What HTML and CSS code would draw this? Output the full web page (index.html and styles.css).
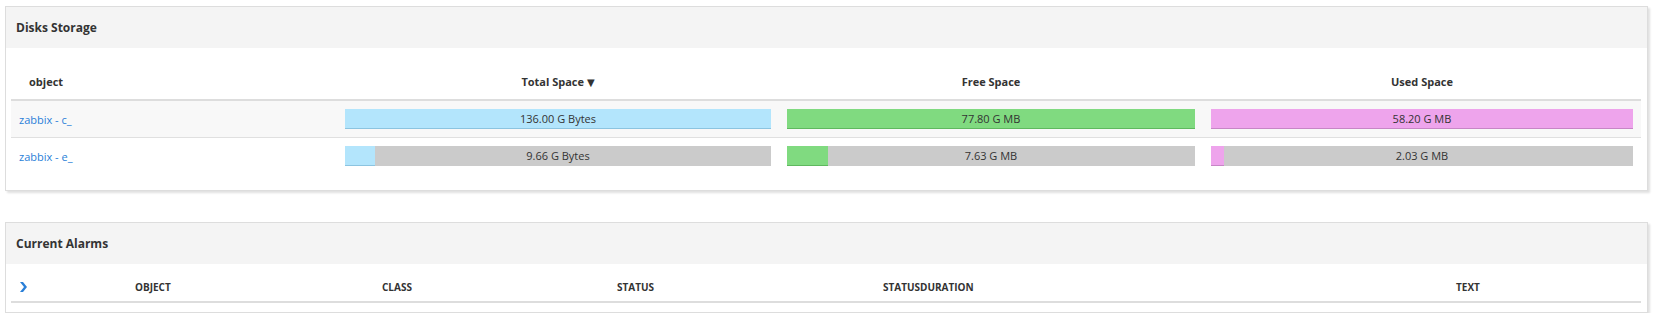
FILE: index.html
```
<!DOCTYPE html>
<html lang="en">
  <head>
    <meta charset="UTF-8" />
    <title>Dashboard</title>
    <link rel="stylesheet" href="styles.css">
  </head>
  <body>
    <!-- Disks Storage widget -->
    <div class="panel">
      <div class="panel-heading">Disks Storage</div>
      <div class="panel-body disks-body">
        <table class="disk-table">
          <colgroup>
            <col class="col-object" />
            <col class="col-total" />
            <col class="col-free" />
            <col class="col-used" />
          </colgroup>
          <thead>
            <tr>
              <th class="th-object">object</th>
              <th>Total Space <span class="sort-arrow">&#9660;</span></th>
              <th>Free Space</th>
              <th>Used Space</th>
            </tr>
          </thead>
          <tbody>
            <tr class="odd">
              <td><a href="#">zabbix - c_</a></td>
              <td>
                <div class="bar">
                  <div class="fill fill-blue" style="width: 100%"></div>
                  <span class="bar-label">136.00 G Bytes</span>
                </div>
              </td>
              <td>
                <div class="bar">
                  <div class="fill fill-green" style="width: 100%"></div>
                  <span class="bar-label">77.80 G MB</span>
                </div>
              </td>
              <td>
                <div class="bar">
                  <div class="fill fill-pink" style="width: 100%"></div>
                  <span class="bar-label">58.20 G MB</span>
                </div>
              </td>
            </tr>
            <tr>
              <td><a href="#">zabbix - e_</a></td>
              <td>
                <div class="bar">
                  <div class="fill fill-blue" style="width: 7%"></div>
                  <span class="bar-label">9.66 G Bytes</span>
                </div>
              </td>
              <td>
                <div class="bar">
                  <div class="fill fill-green" style="width: 10%"></div>
                  <span class="bar-label">7.63 G MB</span>
                </div>
              </td>
              <td>
                <div class="bar">
                  <div class="fill fill-pink" style="width: 3%"></div>
                  <span class="bar-label">2.03 G MB</span>
                </div>
              </td>
            </tr>
          </tbody>
        </table>
      </div>
    </div>

    <!-- Current Alarms widget -->
    <div class="panel">
      <div class="panel-heading">Current Alarms</div>
      <div class="panel-body alarms-body">
        <table class="alarm-table">
          <colgroup>
            <col class="col-toggle" />
            <col class="col-aobject" />
            <col class="col-class" />
            <col class="col-status" />
            <col class="col-duration" />
            <col class="col-text" />
          </colgroup>
          <thead>
            <tr>
              <th>
                <svg class="chevron" width="8" height="10" viewBox="0 0 8 10">
                  <path d="M1 0 L4 0 L8 5 L4 10 L1 10 L5 5 Z" fill="#2a7fd8" />
                </svg>
              </th>
              <th>OBJECT</th>
              <th>CLASS</th>
              <th>STATUS</th>
              <th>STATUSDURATION</th>
              <th>TEXT</th>
            </tr>
          </thead>
        </table>
      </div>
    </div>
  </body>
</html>
```

FILE: styles.css
```
* {
  margin: 0;
  padding: 0;
  box-sizing: border-box;
}

body {
  font-family: "Open Sans", "DejaVu Sans", sans-serif;
  font-size: 11px;
  color: #333;
  background: #fff;
  padding: 6px 6px 0 5px;
}

/* Panels */
.panel {
  border: 1px solid #ddd;
  background: #fff;
  box-shadow: 2px 2px 2px rgba(0, 0, 0, 0.12);
  margin-bottom: 31px;
}

.panel:last-child {
  margin-bottom: 0;
}

.panel-heading {
  background-color: #f4f4f4;
  height: 41px;
  line-height: 41px;
  padding-left: 10px;
  font-size: 12px;
  font-weight: bold;
  color: #333;
}

.panel-body {
  padding: 0 6px 0 5px;
}

.disks-body {
  padding-top: 15px;
  padding-bottom: 16px;
}

.alarms-body {
  padding-top: 8px;
  padding-bottom: 9px;
}

table {
  width: 100%;
  border-collapse: collapse;
  table-layout: fixed;
}

/* Disks table */
.col-object {
  width: 326px;
}

.col-total {
  width: 442px;
}

.col-free {
  width: 424px;
}

.disk-table th {
  height: 37px;
  font-weight: bold;
  text-align: center;
  border-bottom: 2px solid #ddd;
  vertical-align: middle;
}

.disk-table .th-object {
  text-align: left;
  padding-left: 18px;
}

.sort-arrow {
  font-size: 10px;
}

.disk-table td {
  padding: 8px;
  border-bottom: 1px solid #e0e0e0;
  vertical-align: middle;
}

.disk-table tbody tr:last-child td {
  border-bottom: none;
}

.disk-table tr.odd td {
  background-color: #f8f8f8;
}

.disk-table a {
  color: #2a7fd8;
  text-decoration: none;
}

.bar {
  position: relative;
  height: 20px;
  background-color: #cbcbcb;
  text-align: center;
}

.fill {
  position: absolute;
  left: 0;
  top: 0;
  height: 20px;
}

.fill-blue {
  background-color: #b3e5fc;
  border-bottom: 1px solid #8cc4e0;
}

.fill-green {
  background-color: #80da80;
  border-bottom: 1px solid #5fb85f;
}

.fill-pink {
  background-color: #eea4ec;
  border-bottom: 1px solid #c786c6;
}

.bar-label {
  position: relative;
  line-height: 20px;
  color: #333;
}

/* Alarms table */
.col-toggle {
  width: 116px;
}

.col-aobject {
  width: 247px;
}

.col-class {
  width: 235px;
}

.col-status {
  width: 266px;
}

.col-duration {
  width: 573px;
}

.alarm-table th {
  height: 30px;
  text-align: left;
  padding-left: 8px;
  font-size: 10px;
  font-weight: bold;
  border-bottom: 2px solid #ddd;
  vertical-align: middle;
}

.chevron {
  display: block;
}
```
